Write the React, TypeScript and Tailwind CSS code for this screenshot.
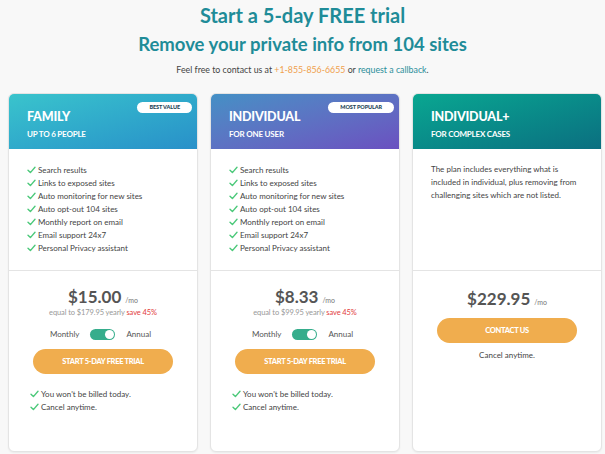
import React from "react";

function Check() {
  return (
    <svg width="9" height="8" viewBox="0 0 9 8" className="shrink-0">
      <path d="M1 4.2 L3.4 6.6 L8 1.2" fill="none" stroke="#4cc97a" strokeWidth="1.4" strokeLinecap="round" strokeLinejoin="round" />
    </svg>
  );
}

const features = [
  "Search results",
  "Links to exposed sites",
  "Auto monitoring for new sites",
  "Auto opt-out 104 sites",
  "Monthly report on email",
  "Email support 24x7",
  "Personal Privacy assistant",
];

function Toggle() {
  return (
    <div className="flex items-center justify-center gap-[11px] text-[8px] text-[#555] mr-[5px]">
      <span>Monthly</span>
      <div className="w-[25px] h-[11px] rounded-full bg-[#36ad8c] flex items-center justify-end pr-[1px]">
        <div className="w-[9px] h-[9px] rounded-full bg-white" />
      </div>
      <span>Annual</span>
    </div>
  );
}

function PlanCard({
  title,
  subtitle,
  badge,
  gradient,
  price,
  equal,
}: {
  title: string;
  subtitle: string;
  badge: string;
  gradient: string;
  price: string;
  equal: string;
}) {
  return (
    <div className="w-[190px] h-[359px] shrink-0 bg-white rounded-[6px] border border-[#e4e4e4] shadow-[0_1px_2px_rgba(0,0,0,0.06)] flex flex-col overflow-hidden">
      <div className={`relative h-[55px] shrink-0 pl-[18px] pt-[17px] text-white ${gradient}`}>
        <div className="text-[12.5px] font-black leading-none tracking-[-0.2px]">{title}</div>
        <div className="text-[8px] font-bold leading-none mt-[6px] tracking-[-0.2px]">{subtitle}</div>
        <div className="absolute top-[8px] right-[5px] h-[11px] px-[12px] rounded-full bg-white flex items-center text-[5.5px] font-black text-[#1c4456] tracking-[-0.1px]">
          {badge}
        </div>
      </div>
      <div className="h-[122px] shrink-0 border-b border-[#e4e4e4] pl-[18px] pt-[14px]">
        {features.map((f) => (
          <div key={f} className="flex items-center gap-[2px] h-[13px] text-[8px] text-[#444]">
            <Check />
            <span>{f}</span>
          </div>
        ))}
      </div>
      <div className="flex flex-col items-center pt-[16px]">
        <div className="flex items-baseline gap-[4px] text-[#555]">
          <span className="text-[17px] font-bold leading-[20px]">{price}</span>
          <span className="text-[7px] text-[#777]">/mo</span>
        </div>
        <div className="text-[7.5px] text-[#999] leading-[9px] mt-[1px] tracking-[-0.1px]">
          {equal} <span className="text-[#e23b3b]">save 45%</span>
        </div>
        <div className="mt-[11px]">
          <Toggle />
        </div>
        <button className="mt-[9px] w-[140px] h-[25px] rounded-full bg-[#f0ad4e] text-white text-[7.5px] font-black tracking-[-0.3px]">
          START 5-DAY FREE TRIAL
        </button>
      </div>
      <div className="pl-[21px] pt-[13px]">
        {["You won't be billed today.", "Cancel anytime."].map((t) => (
          <div key={t} className="flex items-center gap-[2px] h-[13px] text-[8px] text-[#444]">
            <Check />
            <span>{t}</span>
          </div>
        ))}
      </div>
    </div>
  );
}

export default function App() {
  return (
    <div className="w-full min-h-[454px] bg-[#f8f8f8] font-[family-name:Lato] overflow-hidden">
      <div className="text-center pt-[3px]">
        <h1 className="text-[20px] font-bold leading-[25px] text-[#1f8c98]">Start a 5-day FREE trial</h1>
        <h2 className="text-[18.5px] font-bold leading-[26px] mt-[3px] text-[#1f8c98]">Remove your private info from 104 sites</h2>
        <p className="text-[8.8px] text-[#444] mt-[7px] leading-[12px]">
          Feel free to contact us at <span className="text-[#f0a04b]">+1-855-856-6655</span> or{" "}
          <span className="text-[#2a8e9a]">request a callback</span>.
        </p>
      </div>
      <div className="flex gap-[12px] pl-[8px] mt-[17px]">
        <PlanCard
          title="FAMILY"
          subtitle="UP TO 6 PEOPLE"
          badge="BEST VALUE"
          gradient="bg-gradient-to-br from-[#3ac4cc] to-[#2990c9]"
          price="$15.00"
          equal="equal to $179.95 yearly"
        />
        <PlanCard
          title="INDIVIDUAL"
          subtitle="FOR ONE USER"
          badge="MOST POPULAR"
          gradient="bg-gradient-to-br from-[#4390c5] to-[#6a50c0]"
          price="$8.33"
          equal="equal to $99.95 yearly"
        />
        <div className="w-[190px] h-[359px] shrink-0 bg-white rounded-[6px] border border-[#e4e4e4] shadow-[0_1px_2px_rgba(0,0,0,0.06)] flex flex-col overflow-hidden">
          <div className="h-[55px] shrink-0 pl-[18px] pt-[17px] text-white bg-gradient-to-br from-[#0aa791] to-[#0b6f80]">
            <div className="text-[12.5px] font-black leading-none tracking-[-0.2px]">INDIVIDUAL+</div>
            <div className="text-[8px] font-bold leading-none mt-[6px] tracking-[-0.2px]">FOR COMPLEX CASES</div>
          </div>
          <div className="h-[122px] shrink-0 border-b border-[#e4e4e4] pl-[18px] pr-[16px] pt-[14px] text-[8px] leading-[13px] text-[#444]">
            The plan includes everything what is included in individual, plus removing from challenging sites which are not listed.
          </div>
          <div className="flex flex-col items-center pt-[18px]">
            <div className="flex items-baseline gap-[4px] text-[#555]">
              <span className="text-[17px] font-bold leading-[20px]">$229.95</span>
              <span className="text-[7px] text-[#777]">/mo</span>
            </div>
            <button className="mt-[9px] w-[140px] h-[25px] rounded-full bg-[#f0ad4e] text-white text-[7.5px] font-black tracking-[-0.3px]">
              CONTACT US
            </button>
            <div className="mt-[6px] text-[8px] text-[#444]">Cancel anytime.</div>
          </div>
        </div>
      </div>
    </div>
  );
}
